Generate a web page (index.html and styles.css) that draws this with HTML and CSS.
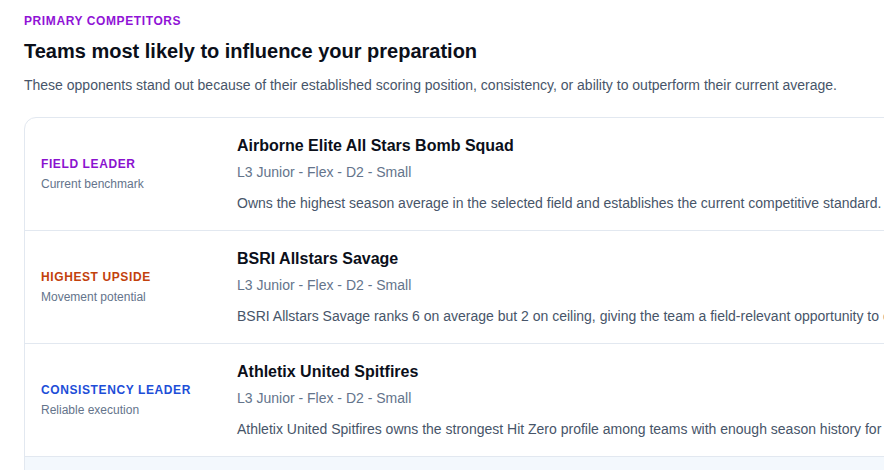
FILE: index.html
```html
<!DOCTYPE html>
<html lang="en">
<head>
<meta charset="utf-8">
<title>Primary competitors</title>
<link rel="stylesheet" href="styles.css">
</head>
<body>
<section class="section">
  <div class="eyebrow">PRIMARY COMPETITORS</div>
  <h2 class="title">Teams most likely to influence your preparation</h2>
  <p class="lead">These opponents stand out because of their established scoring position, consistency, or ability to outperform their current average.</p>

  <div class="card">
    <div class="row">
      <div class="label">
        <div class="tag tag-purple">FIELD LEADER</div>
        <div class="sub">Current benchmark</div>
      </div>
      <div class="body">
        <div class="name">Airborne Elite All Stars Bomb Squad</div>
        <div class="meta">L3 Junior - Flex - D2 - Small</div>
        <div class="desc">Owns the highest season average in the selected field and establishes the current competitive standard.</div>
      </div>
    </div>
    <div class="row">
      <div class="label">
        <div class="tag tag-orange">HIGHEST UPSIDE</div>
        <div class="sub">Movement potential</div>
      </div>
      <div class="body">
        <div class="name">BSRI Allstars Savage</div>
        <div class="meta">L3 Junior - Flex - D2 - Small</div>
        <div class="desc">BSRI Allstars Savage ranks 6 on average but 2 on ceiling, giving the team a field-relevant opportunity to climb.</div>
      </div>
    </div>
    <div class="row">
      <div class="label">
        <div class="tag tag-blue">CONSISTENCY LEADER</div>
        <div class="sub">Reliable execution</div>
      </div>
      <div class="body">
        <div class="name">Athletix United Spitfires</div>
        <div class="meta">L3 Junior - Flex - D2 - Small</div>
        <div class="desc">Athletix United Spitfires owns the strongest Hit Zero profile among teams with enough season history for comparison.</div>
      </div>
    </div>
    <div class="row row-own">
      <div class="label">
        <div class="tag tag-blue">YOUR TEAM</div>
        <div class="sub">Reference point</div>
      </div>
      <div class="body">
        <div class="name">Your team</div>
        <div class="meta">L3 Junior - Flex - D2 - Small</div>
        <div class="desc">Compare your current average against the teams above.</div>
      </div>
    </div>
  </div>
</section>
</body>
</html>
```
FILE: styles.css
```css
html, body {
  margin: 0;
  padding: 0;
  overflow: hidden;
  background: #ffffff;
}
body {
  font-family: "Liberation Sans", Arial, sans-serif;
  color: #0f172a;
}
.section {
  padding: 13px 24px 24px;
  width: 1120px;
}
.eyebrow {
  font-size: 12px;
  font-weight: 700;
  letter-spacing: 0.6px;
  color: #9013d6;
  line-height: 16px;
}
.title {
  margin: 8px 0 0;
  font-size: 20px;
  line-height: 28px;
  font-weight: 700;
  color: #0b0f1a;
}
.lead {
  margin: 10px 0 0;
  font-size: 14px;
  line-height: 20px;
  color: #475569;
}
.card {
  margin-top: 22px;
  border: 1px solid #e2e8f0;
  border-radius: 12px;
  overflow: hidden;
  background: #ffffff;
}
.row {
  display: grid;
  grid-template-columns: 180px 1fr;
  column-gap: 16px;
  align-items: center;
  padding: 17px 16px 17px;
  border-top: 1px solid #e2e8f0;
}
.row:first-child {
  border-top: none;
}
.row-own {
  background: #f3f8fd;
}
.tag {
  font-size: 12px;
  font-weight: 700;
  letter-spacing: 0.6px;
  line-height: 16px;
}
.tag-purple { color: #8a12cf; }
.tag-orange { color: #c2410c; }
.tag-blue { color: #1d4ed8; }
.sub {
  margin-top: 4px;
  font-size: 12px;
  line-height: 16px;
  color: #64748b;
}
.name {
  font-size: 16px;
  font-weight: 700;
  line-height: 22px;
  color: #0b0f1a;
}
.meta {
  margin-top: 5px;
  font-size: 14px;
  line-height: 20px;
  color: #64748b;
}
.desc {
  margin-top: 11px;
  font-size: 14px;
  line-height: 20px;
  color: #475569;
  white-space: nowrap;
}
```
